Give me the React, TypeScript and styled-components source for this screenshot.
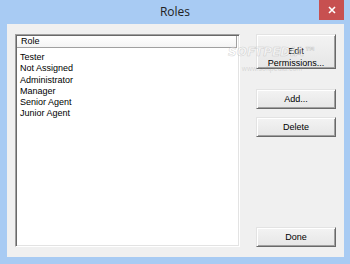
import React from 'react';
import styled, { createGlobalStyle } from 'styled-components';

const GlobalStyle = createGlobalStyle`
  html, body {
    margin: 0;
    padding: 0;
    background: #ffffff;
  }
  body {
    font-family: "Liberation Sans", Arial, sans-serif;
  }
`;

const Window = styled.div`
  position: relative;
  width: 350px;
  height: 264px;
  background: #a8cbf3;
  display: flex;
  flex-direction: column;
  box-sizing: border-box;
  overflow: hidden;
`;

const TitleBar = styled.div`
  height: 24px;
  display: grid;
  grid-template-columns: 1fr auto 1fr;
  align-items: start;
`;

const Title = styled.div`
  grid-column: 2;
  line-height: 24px;
  font-family: "Open Sans", "Noto Sans", sans-serif;
  font-size: 12px;
  color: #222222;
`;

const CloseButton = styled.div`
  grid-column: 3;
  justify-self: end;
  width: 25px;
  height: 20px;
  margin-right: 6px;
  background: #c75050;
  display: flex;
  align-items: center;
  justify-content: center;
`;

const Client = styled.div`
  flex: 1;
  margin: 0 6px 7px 7px;
  padding: 10px 8px;
  background: #f0f0f0;
  display: flex;
  gap: 16px;
  box-sizing: border-box;
`;

const ListBox = styled.div`
  width: 225px;
  box-sizing: border-box;
  background: #ffffff;
  border: 1px solid;
  border-color: #a0a0a0 #ffffff #ffffff #a0a0a0;
  box-shadow: inset 1px 1px 0 #696969, inset -1px -1px 0 #e3e3e3;
  padding: 1px;
  display: flex;
  flex-direction: column;
`;

const ListHeader = styled.div`
  height: 11px;
  line-height: 11px;
  padding-left: 4px;
  font-size: 9px;
  color: #000000;
  background: linear-gradient(#ffffff, #f4f4f4);
  border-bottom: 1px solid #a0a0a0;
  border-right: 1px solid #a0a0a0;
  margin-right: 1px;
`;

const ListBody = styled.div`
  padding: 4px 0 0 3px;
  display: flex;
  flex-direction: column;
`;

const ListItem = styled.div`
  font-size: 9px;
  line-height: 11.3px;
  color: #000000;
  white-space: nowrap;
`;

const ButtonColumn = styled.div`
  width: 80px;
  display: flex;
  flex-direction: column;
`;

const DialogButton = styled.div<{ $height?: number; $gap?: number; $push?: boolean }>`
  height: ${p => p.$height ?? 20}px;
  margin-top: ${p => (p.$push ? 'auto' : `${p.$gap ?? 0}px`)};
  box-sizing: border-box;
  background: linear-gradient(#f3f3f3, #e6e6e6);
  border: 1px solid;
  border-color: #e3e3e3 #696969 #696969 #e3e3e3;
  box-shadow: inset 1px 1px 0 #ffffff, inset -1px -1px 0 #a0a0a0;
  display: flex;
  flex-direction: column;
  align-items: center;
  justify-content: center;
  font-size: 9px;
  line-height: 12px;
  color: #000000;
  text-align: center;
`;

const TallButton = styled(DialogButton)`
  justify-content: flex-start;
  padding-top: 10px;
`;

const Watermark = styled.div`
  position: absolute;
  left: 222px;
  top: 46px;
  width: 100px;
  display: flex;
  flex-direction: column;
  align-items: center;
  pointer-events: none;
`;

const WatermarkBig = styled.div`
  font-family: "DejaVu Sans", sans-serif;
  font-weight: bold;
  font-style: italic;
  font-size: 12px;
  line-height: 13px;
  color: rgba(255, 255, 255, 0.4);
  -webkit-text-stroke: 0.6px rgba(140, 140, 140, 0.35);
  white-space: nowrap;
`;

const WatermarkSmall = styled.div`
  font-size: 7px;
  margin-top: 6px;
  color: rgba(150, 150, 150, 0.3);
`;

const roles = ['Tester', 'Not Assigned', 'Administrator', 'Manager', 'Senior Agent', 'Junior Agent'];

const App: React.FC = () => {
  return (
    <>
      <GlobalStyle />
      <Window>
        <TitleBar>
          <Title>Roles</Title>
          <CloseButton>
            <svg width="8" height="8" viewBox="0 0 8 8">
              <path d="M1 1 L7 7 M7 1 L1 7" stroke="#ffffff" strokeWidth="1.6" />
            </svg>
          </CloseButton>
        </TitleBar>
        <Client>
          <ListBox>
            <ListHeader>Role</ListHeader>
            <ListBody>
              {roles.map(r => (
                <ListItem key={r}>{r}</ListItem>
              ))}
            </ListBody>
          </ListBox>
          <ButtonColumn>
            <TallButton $height={35}>
              <span>Edit</span>
              <span>Permissions...</span>
            </TallButton>
            <DialogButton $gap={20}>Add...</DialogButton>
            <DialogButton $gap={8}>Delete</DialogButton>
            <DialogButton $push>Done</DialogButton>
          </ButtonColumn>
        </Client>
        <Watermark>
          <WatermarkBig>SOFTPEDIA™</WatermarkBig>
          <WatermarkSmall>www.softpedia.com</WatermarkSmall>
        </Watermark>
      </Window>
    </>
  );
};

export default App;
